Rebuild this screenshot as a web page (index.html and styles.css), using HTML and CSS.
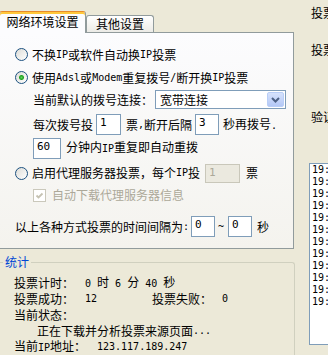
FILE: index.html
```html
<!DOCTYPE html>
<html lang="zh-CN">
<head>
    <meta charset="UTF-8">
    <title>投票设置</title>
    <link rel="stylesheet" href="styles.css">
</head>
<body>

    <div id="main">
        <div class="left">
            <div class="tabs">
                <div class="tab active">网络环境设置</div>
                <div class="tab">其他设置</div>
            </div>

            <div class="panel">
                <div class="row row1">
                    <input type="radio" class="radio" name="mode">
                    不换<span class="en">IP</span>或软件自动换<span class="en">IP</span>投票
                </div>
                <div class="row row2">
                    <input type="radio" class="radio" name="mode" checked>
                    使用<span class="en">Adsl</span>或<span class="en">Modem</span>重复拨号<span class="en">/</span>断开换<span class="en">IP</span>投票
                </div>
                <div class="row row3 indent">
                    当前默认的拨号连接：
                    <div class="combo">
                        <span class="combo_text">宽带连接</span>
                        <span class="combo_btn">
                            <svg width="9" height="6" viewBox="0 0 9 6"><path d="M1 1 L4.5 4.5 L8 1" fill="none" stroke="#4d6185" stroke-width="2"/></svg>
                        </span>
                    </div>
                </div>
                <div class="row row4 indent">
                    每次拨号投
                    <input type="text" class="field w25 ml3" value="1">
                    <span class="ml5">票</span><span class="en">, </span>断开后隔
                    <input type="text" class="field w24 ml3" value="3">
                    <span class="ml4">秒再拨号<span class="en">.</span></span>
                </div>
                <div class="row row5 indent">
                    <input type="text" class="field w28" value="60">
                    <span class="ml5">分钟内<span class="en">IP</span>重复即自动重拨</span>
                </div>
                <div class="row row6">
                    <input type="radio" class="radio" name="mode">
                    启用代理服务器投票，每个<span class="en">IP</span>投
                    <input type="text" class="field w35 ml5 disabled" value="1" disabled>
                    <span class="ml6">票</span>
                </div>
                <div class="row row7 indent grey">
                    <span class="check">
                        <svg width="11" height="11" viewBox="0 0 11 11"><path d="M2.5 5.5 L4.5 7.5 L8.5 3.5" fill="none" stroke="#c5c2b2" stroke-width="1.8"/></svg>
                    </span>
                    自动下载代理服务器信息
                </div>
                <div class="row row8">
                    以上各种方式投票的时间间隔为<span class="en">:</span>
                    <input type="text" class="field w24 ml2" value="0">
                    <span class="en tilde">~</span>
                    <input type="text" class="field w24" value="0">
                    <span class="ml5">秒</span>
                </div>
            </div>

            <fieldset class="stats">
                <legend>统计</legend>
                <div class="stat_row">
                    <span class="k">投票计时：</span>
                    <span><span class="en">0 </span>时<span class="en"> 6 </span>分<span class="en"> 40 </span>秒</span>
                </div>
                <div class="stat_row">
                    <span class="k">投票成功：</span>
                    <span class="v en">12</span>
                    <span class="k2">投票失败：</span>
                    <span class="en">0</span>
                </div>
                <div class="stat_row">
                    <span class="k">当前状态：</span>
                </div>
                <div class="stat_row status">正在下载并分析投票来源页面<span class="en">...</span></div>
                <div class="stat_row">
                    <span class="k wide">当前<span class="en">IP</span>地址：</span>
                    <span class="en">123.117.189.247</span>
                </div>
            </fieldset>
        </div>

        <div class="right">
            <div class="side_label l1">投票地址：</div>
            <div class="side_label l2">投票次数：</div>
            <div class="side_label l3">验证码：</div>
            <div class="log">
                <div>19:23:05 投票成功</div>
                <div>19:23:11 投票成功</div>
                <div>19:23:18 投票成功</div>
                <div>19:23:24 投票成功</div>
                <div>19:23:31 投票成功</div>
                <div>19:23:37 投票成功</div>
                <div>19:23:44 投票成功</div>
                <div>19:23:50 投票成功</div>
                <div>19:23:57 投票成功</div>
                <div>19:24:03 投票成功</div>
                <div>19:24:10 投票成功</div>
                <div>19:24:16 投票成功</div>
            </div>
        </div>
    </div>

</body>
</html>
```

FILE: styles.css
```css
body {
    margin: 0;
    width: 328px;
    height: 355px;
    overflow: hidden;
    background: #ece9d8;
    color: #000;
    font: 12px/12px "Noto Sans CJK SC", sans-serif;
}

.en {
    font-family: "DejaVu Sans Mono", monospace;
    font-size: 10px;
}

#main {
    display: flex;
}

.left {
    flex: none;
    width: 296px;
    margin-left: -1px;
}

.right {
    flex: none;
    width: 40px;
    overflow: hidden;
}

/* tabs */

.tabs {
    display: flex;
    align-items: flex-end;
    height: 32px;
}

.tab {
    box-sizing: border-box;
    display: flex;
    align-items: center;
    justify-content: center;
    width: 68px;
    height: 17px;
    border: 1px solid #919b9c;
    border-bottom: none;
    border-radius: 3px 3px 0 0;
    background: linear-gradient(#fff, #ecebe6);
}

.tab.active {
    position: relative;
    z-index: 1;
    width: 87px;
    height: 22px;
    margin-bottom: -1px;
    padding-bottom: 1px;
    border-top: 1px solid #e68b2c;
    background: #fcfcfe;
    box-shadow: inset 0 2px 0 #ffc83c;
}

/* panel */

.panel {
    box-sizing: border-box;
    width: 295px;
    padding: 10px 0 10px 15px;
    border: 1px solid #919b9c;
    background: linear-gradient(#fcfcfe, #f4f3ee);
}

.row {
    display: flex;
    align-items: center;
    white-space: nowrap;
    height: 23px;
}

.indent {
    padding-left: 18px;
}

.row3 { height: 21px; }
.row4 { margin-top: 3px; }
.row5 { margin-top: 1px; height: 22px; }
.row6 { margin-top: 2px; height: 24px; }
.row7 { height: 20px; }
.row8 { margin-top: 10px; }

.grey {
    color: #aca899;
}

.radio {
    -webkit-appearance: none;
    appearance: none;
    flex: none;
    box-sizing: border-box;
    width: 13px;
    height: 13px;
    margin: 0 4px 0 0;
    border: 1px solid #1c5180;
    border-radius: 50%;
    background: linear-gradient(135deg, #dcdcd7, #fff);
}

.radio:checked {
    background: radial-gradient(circle, #5ed25e 0, #21a121 2px, transparent 3px),
                linear-gradient(135deg, #dcdcd7, #fff);
}

.check {
    box-sizing: border-box;
    display: flex;
    align-items: center;
    justify-content: center;
    width: 13px;
    height: 13px;
    margin-right: 6px;
    border: 1px solid #cac8bb;
    background: #fff;
}

.field {
    box-sizing: border-box;
    height: 21px;
    margin: 0;
    padding: 0 3px 4px;
    border: 1px solid #7f9db9;
    background: #fff;
    color: #000;
    font: 11px "DejaVu Sans Mono", monospace;
    outline: none;
}

.field.disabled {
    height: 19px;
    padding-bottom: 2px;
    border-color: #c9c7ba;
    background: #ebe9df;
    color: #aca899;
}

.w24 { width: 24px; }
.w25 { width: 25px; }
.w28 { width: 28px; }
.w35 { width: 35px; }

.ml2 { margin-left: 2px; }
.ml3 { margin-left: 3px; }
.ml4 { margin-left: 4px; }
.ml5 { margin-left: 5px; }
.ml6 { margin-left: 6px; }

.tilde {
    margin: 0 4px 0 3px;
}

.combo {
    box-sizing: border-box;
    display: flex;
    align-items: center;
    justify-content: space-between;
    width: 131px;
    height: 19px;
    margin-left: 2px;
    padding: 1px 1px 1px 4px;
    border: 1px solid #7f9db9;
    background: #fff;
}

.combo_btn {
    box-sizing: border-box;
    display: flex;
    align-items: center;
    justify-content: center;
    width: 17px;
    height: 100%;
    border: 1px solid #b9cef7;
    border-radius: 2px;
    background: linear-gradient(#d6e2fc, #b4c8f6);
}

/* stats */

.stats {
    box-sizing: border-box;
    width: 298px;
    height: 99px;
    margin: 7px 0 0 -2px;
    padding: 7px 0 0 16px;
    border: 1px solid #d0d0bf;
    border-bottom: none;
    border-radius: 3px 3px 0 0;
}

.stats legend {
    margin-left: -11px;
    padding: 0 2px;
    color: #0046d5;
    line-height: 12px;
}

.stat_row {
    display: flex;
    align-items: center;
    height: 16px;
    white-space: nowrap;
}

.k {
    width: 71px;
}

.k.wide {
    width: 83px;
}

.v {
    width: 67px;
}

.k2 {
    width: 70px;
}

.status {
    padding-left: 23px;
}

/* right side */

.side_label {
    height: 12px;
    padding-left: 16px;
    white-space: nowrap;
}

.l1 { margin-top: 7px; }
.l2 { margin-top: 25px; }
.l3 { margin-top: 55px; }

.log {
    box-sizing: border-box;
    width: 60px;
    height: 182px;
    margin: 40px 0 0 14px;
    padding-left: 2px;
    border: 1px solid #7f9db9;
    background: #fff;
    font: 10px/12px "DejaVu Sans Mono", "Noto Sans CJK SC", monospace;
    white-space: nowrap;
    overflow: hidden;
}
```
